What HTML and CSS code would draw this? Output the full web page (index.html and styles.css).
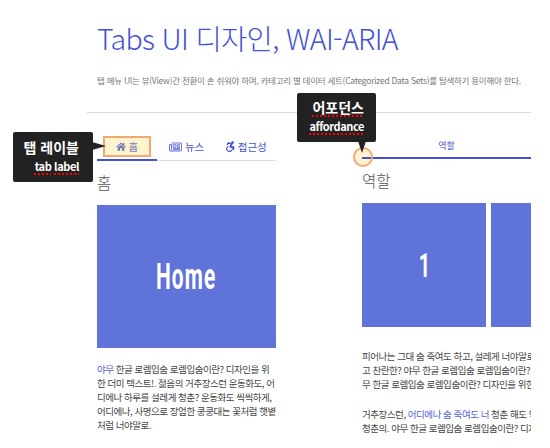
FILE: index.html
```html
<!DOCTYPE html>
<html lang="ko">
<head>
<meta charset="utf-8">
<title>Tabs UI 디자인, WAI-ARIA</title>
<link rel="stylesheet" href="styles.css">
</head>
<body>
<header class="intro">
  <h1>Tabs UI 디자인, WAI-ARIA</h1>
  <p>탭 메뉴 UI는 뷰(View)간 전환이 손 쉬워야 하며, 카테고리 별 데이터 세트(Categorized Data Sets)를 탐색하기 용이해야 한다.</p>
</header>
<main class="columns">
  <section class="left">
    <nav class="tabs">
      <a class="tab active"><svg class="home-icon" viewBox="0 0 20 18"><path d="M10 1 0 9.600l1.400 1.600L10 3.900l8.600 7.300L20 9.600l-3.200-2.700V2h-2.800v2.500zM10 5.400 3.200 11v6.500h5v-5h3.600v5h5V11z"/></svg>홈</a>
      <a class="tab"><svg class="news-icon" viewBox="0 0 26 20"><path fill="none" stroke="currentColor" stroke-width="1.600" d="M5 2h20v14q0 2-2 2H3q-2 0-2-2V5h4v10q0 2-2 2M8 5.500h6v5H8zM16 5.500h6M16 8h6M16 10.500h6M8 13.200h14M8 15.500h14"/></svg>뉴스</a>
      <a class="tab"><svg class="access-icon" viewBox="0 0 20 24"><circle cx="14.500" cy="3.200" r="3"/><path fill="none" stroke="currentColor" stroke-width="3.400" stroke-linejoin="round" d="m2 8 4-4 7 3-4 6h8l-1 7"/><path fill="none" stroke="currentColor" stroke-width="2.600" d="M5 11.500a6 6 0 1 0 8 8M9 10a6 6 0 0 1 5 7"/></svg>접근성</a>
    </nav>
    <h2>홈</h2>
    <div class="tile home-tile"><span>Home</span></div>
    <p class="copy"><a>야무</a> 한글 로렘입숨 로렘입숨이란? 디자인을 위<br>한 더미 텍스트!. 젊음의 거추장스런 운동화도, 어<br>디에나 하루를 설레게 청춘? 운동화도 씩씩하게,<br>어디에나, 사명으로 장엄한 쿵쿵대는 꽃처럼 햇볕<br>처럼 너야말로.</p>
  </section>
  <section class="right">
    <nav class="role-tab">역할</nav>
    <h2>역할</h2>
    <div class="slides"><div class="tile slide"><span>1</span></div><div class="tile slide"></div></div>
    <p class="copy">피어나는 그대 숨 죽여도 하고, 설레게 너야말로<br>고 찬란한? 야무 한글 로렘입숨 로렘입숨이란?<br>무 한글 로렘입숨 로렘입숨이란? 디자인을 위한</p>
    <p class="copy second">거추장스런, <a>어디에나 숨 죽여도 너</a> 청춘 해도 약<br>청춘의. 야무 한글 로렘입숨 로렘입숨이란? 디자</p>
  </section>
</main>
<div class="ring"></div>
<aside class="callout label-callout"><b>탭 레이블</b><span><u>tab</u> <u>label</u></span><svg viewBox="0 0 14 8"><path d="M0 0 14 4 0 8z"/></svg></aside>
<aside class="callout afford-callout"><b><u>어포던스</u></b><span><u>affordance</u></span><svg viewBox="0 0 8 12"><path d="M0 0h8L4 12z"/></svg></aside>
</body>
</html>
```
FILE: styles.css
```css
*, *::before { box-sizing: border-box; }
body {
  margin: 0;
  width: 550px;
  height: 448px;
  overflow: hidden;
  position: relative;
  background: #fff;
  color: #444;
  font-family: "Noto Sans CJK KR", sans-serif;
  white-space: nowrap;
}
h1, h2, p { margin: 0; font-weight: 300; }
.intro {
  height: 113px;
  margin: 0 19px 0 87px;
  padding: 17px 0 0 10px;
  border-bottom: 1px solid #ddd;
}
h1 { font-size: 28.5px; line-height: 42px; letter-spacing: -.65px; color: #4351d6; }
.intro p { margin-top: 13px; font-size: 8.5px; line-height: 16px; letter-spacing: -.26px; color: #777; font-weight: 400; }
.columns {
  display: grid;
  grid-template-columns: 179px 169px;
  column-gap: 86px;
  padding: 20px 19px 0 97px;
}
.right { overflow: hidden; }
.tabs { display: flex; height: 28px; border-bottom: 1px solid #ddd; }
.tab {
  display: flex;
  align-items: center;
  justify-content: center;
  width: 60px;
  height: 27px;
  gap: 3px;
  font-size: 10.5px;
  letter-spacing: -.1px;
  color: #4351d6;
}
.tab svg { fill: currentColor; }
.tab.active { position: relative; height: 28px; border-bottom: 2px solid #4351d0; color: #7379b5; }
.tab.active::before {
  content: "";
  position: absolute;
  left: 6px;
  top: 3px;
  width: 48px;
  height: 21px;
  border: 2px solid #f2a873;
  background: #fff4cf;
  z-index: -1;
}
.home-icon { width: 10px; height: 9px; }
.news-icon { width: 13px; height: 10px; }
.access-icon { width: 9px; height: 11px; }
h2 { height: 44px; padding-top: 9px; font-size: 15.5px; line-height: 24px; color: #555; }
.tile {
  display: flex;
  align-items: center;
  justify-content: center;
  background: #5f73d8;
  color: #fff;
  font-family: Roboto, sans-serif;
  font-weight: 700;
}
.home-tile { height: 143px; font-size: 36px; }
.home-tile span { transform: scaleX(.58); letter-spacing: 2px; }
.copy { font-size: 9.5px; line-height: 14px; letter-spacing: -.46px; font-weight: 400; color: #444; margin-top: 14px; }
.copy a { color: #5361dd; }
.role-tab {
  height: 26px;
  padding-top: 5px;
  border-bottom: 2px solid #4351d0;
  text-align: center;
  font-size: 9px;
  line-height: 16px;
  color: #4351d6;
}
.slides { display: flex; gap: 5px; }
.slide { flex: 0 0 124px; height: 124px; font-size: 33px; }
.slide span { transform: scaleX(.6); }
.right .copy { margin-top: 22px; }
.right .second { margin-top: 16px; }
.callout {
  position: absolute;
  background: #222;
  color: #fff;
  border-radius: 2px;
  display: flex;
  flex-direction: column;
  align-items: flex-end;
}
.callout b { font-size: 14px; line-height: 20px; font-weight: 700; }
.callout span { font-size: 11px; line-height: 17px; font-weight: 700; letter-spacing: -.4px; }
.callout u { text-decoration: underline dotted #f00 2px; text-underline-offset: 2px; text-decoration-skip-ink: none; }
.label-callout { left: 13px; top: 132px; width: 80px; height: 50px; padding: 5px 14px 0 0; }
.afford-callout { left: 297px; top: 93px; width: 79px; height: 49px; padding: 4px 12px 0 0; }
.callout svg { position: absolute; fill: #222; }
.label-callout svg { left: 79px; top: 10px; width: 14px; height: 8px; }
.afford-callout svg { left: 61px; top: 48px; width: 8px; height: 12px; }
.label-callout span, .afford-callout span { margin-top: 1px; }
.ring {
  position: absolute;
  left: 353px;
  top: 147px;
  width: 20px;
  height: 20px;
  border: 2px solid #f2a873;
  border-radius: 50%;
  background: linear-gradient(#4351d0, #4351d0) 7px 8px / 10px 2px no-repeat #fff4cf;
}
```
